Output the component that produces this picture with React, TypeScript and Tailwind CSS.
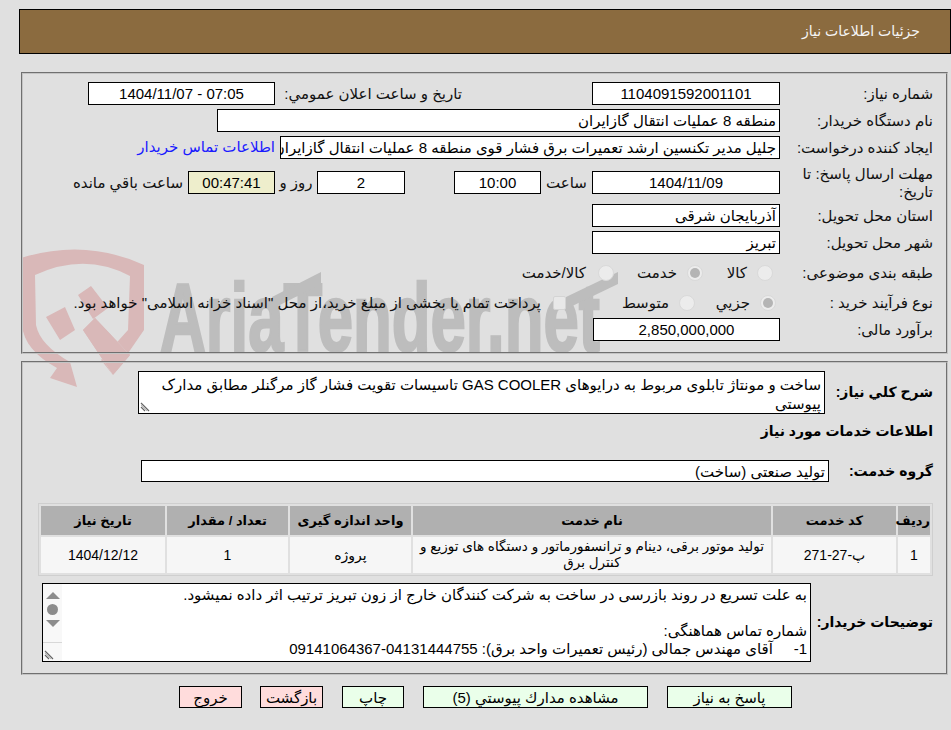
const font = { fontFamily: '"Liberation Sans", "DejaVu Sans", "Noto Sans CJK SC", sans-serif' }

const labelCls = 'shrink-0 text-[15px] leading-[18px] text-[#111]'
const boxCls = 'shrink-0 h-[23px] border border-black bg-white text-[15px] leading-[21px] overflow-hidden whitespace-nowrap'

function Field({ w, center, children, cls }: { w: string; center?: boolean; children: React.ReactNode; cls?: string }) {
  return (
    <div className={`${boxCls} ${w} ${center ? 'text-center' : 'px-[3px]'} ${cls ?? ''}`}>{children}</div>
  )
}

function Radio({ checked }: { checked?: boolean }) {
  return (
    <span className="shrink-0 w-[16px] h-[16px] rounded-full bg-[#ececec] border border-[#d9d9d9] flex items-center justify-center">
      {checked && <span className="w-[10px] h-[10px] rounded-full bg-[#b4b4b4]" />}
    </span>
  )
}

function Grip() {
  return (
    <svg className="absolute left-[1px] bottom-[1px]" width="12" height="12" viewBox="0 0 12 12">
      <path d="M1 3 L9 11 M1 7 L5 11" stroke="#666" strokeWidth="1.2" fill="none" />
      <path d="M1 5 L7 11" stroke="#bbb" strokeWidth="1" fill="none" />
    </svg>
  )
}

function Watermark() {
  return (
    <svg className="absolute left-0 top-0 pointer-events-none" width="951" height="400" viewBox="0 0 951 400">
      {/* shield */}
      <path
        d="M21 258 Q85 238 144 265 L144 330 L113 375 L130 355 L95 318 L83 330 L113 375 L101 360 L128 330 L130 276 Q85 252 35 275 L36 325 Q40 345 70 362 L77 387 L50 378 L57 368 Q24 350 22 325 Z"
        fill="#d9b8b8"
      />
      <path d="M46 317 L65 307 L75 330 L60 340 Z M78 295 L91 286 L108 308 L93 319 Z" fill="#d9b8b8" />
      <path d="M95 318 L83 330 L113 375 L130 355 Z" fill="#d9b8b8" />
      {/* wordmark */}
      <text
        x="160"
        y="351"
        fontFamily="Liberation Sans"
        fontWeight="700"
        fontSize="96"
        fill="#bdbdbd"
        stroke="#bdbdbd"
        strokeWidth="2.5"
        textLength="440"
        lengthAdjust="spacingAndGlyphs"
        direction="ltr"
      >
        AriaTender.net
      </text>
      <path d="M272 297 L321 272 L321 284 L272 309 Z M566 297 L618 272 L618 284 L566 309 Z" fill="#bdbdbd" />
    </svg>
  )
}

export default function App() {
  return (
    <div dir="rtl" style={font} className="relative w-[951px] h-[730px] overflow-hidden bg-[#e0e0e0] text-black pt-[9px]">
      <Watermark />

      <div className="relative ml-[19px] h-[45px] bg-[#8b6b3f] border border-black pr-[30px] flex items-center text-[14px] text-[#f5f5f5]">
        جزئيات اطلاعات نياز
      </div>

      {/* بخش اول */}
      <div className="relative ml-[21px] mr-[3px] mt-[18px] h-[282px] border-2 [border-style:groove] border-[#c4c4c4] pt-[8px] pr-[13px] flex flex-col">
        <div className="flex items-center">
          <div className={`${labelCls} w-[153px]`}>شماره نياز:</div>
          <Field w="w-[188px]" center>1104091592001101</Field>
          <div className={`${labelCls} w-[317px] pr-[130px] whitespace-nowrap`}>تاريخ و ساعت اعلان عمومي:</div>
          <Field w="w-[187px]" center>07:05 - 1404/11/07</Field>
        </div>

        <div className="flex items-center mt-[4px]">
          <div className={`${labelCls} w-[153px]`}>نام دستگاه خريدار:</div>
          <Field w="w-[563px]">منطقه 8 عمليات انتقال گازايران</Field>
        </div>

        <div className="flex items-center mt-[4px]">
          <div className={`${labelCls} w-[153px]`}>ايجاد كننده درخواست:</div>
          <Field w="w-[500px]">جليل مدير تكنسين ارشد تعميرات برق فشار قوى منطقه 8 عمليات انتقال گازايران</Field>
          <a className="mr-[5px] text-[15px] text-[#1a1aff] whitespace-nowrap">اطلاعات تماس خريدار</a>
        </div>

        <div className="flex items-center mt-[6px] h-[35px]">
          <div className={`${labelCls} w-[153px]`}>مهلت ارسال پاسخ: تا تاريخ:</div>
          <Field w="w-[188px]" center>1404/11/09</Field>
          <div className={`${labelCls} w-[51px] text-center`}>ساعت</div>
          <Field w="w-[87px]" center>10:00</Field>
          <div className="w-[49px] shrink-0" />
          <Field w="w-[88px]" center>2</Field>
          <div className={`${labelCls} w-[42px] text-center`}>روز و</div>
          <Field w="w-[87px]" center cls="!bg-[#eeeecc]">00:47:41</Field>
          <div className={`${labelCls} mr-[5px] whitespace-nowrap`}>ساعت باقي مانده</div>
        </div>

        <div className="flex items-center mt-[4px]">
          <div className={`${labelCls} w-[153px]`}>استان محل تحويل:</div>
          <Field w="w-[188px]">آذربايجان شرقى</Field>
        </div>

        <div className="flex items-center mt-[4px]">
          <div className={`${labelCls} w-[153px]`}>شهر محل تحويل:</div>
          <Field w="w-[188px]">تبريز</Field>
        </div>

        <div className="flex items-center mt-[5px] h-[27px]">
          <div className={`${labelCls} w-[160px]`}>طبقه بندی موضوعی:</div>
          <div className="w-[70px] flex items-center shrink-0">
            <Radio />
            <span className={`${labelCls} mr-[10px]`}>كالا</span>
          </div>
          <div className="w-[89px] flex items-center shrink-0">
            <Radio checked />
            <span className={`${labelCls} mr-[10px]`}>خدمت</span>
          </div>
          <div className="flex items-center shrink-0">
            <Radio />
            <span className={`${labelCls} mr-[12px]`}>كالا/خدمت</span>
          </div>
        </div>

        <div className="flex items-center mt-[3px] h-[28px]">
          <div className={`${labelCls} w-[157px]`}>نوع فرآيند خريد :</div>
          <div className="w-[81px] flex items-center shrink-0">
            <Radio checked />
            <span className={`${labelCls} mr-[10px]`}>جزيي</span>
          </div>
          <div className="w-[129px] flex items-center shrink-0">
            <Radio />
            <span className={`${labelCls} mr-[10px]`}>متوسط</span>
          </div>
          <div className="flex items-center shrink-0">
            <span className="shrink-0 w-[13px] h-[14px] rounded-[2px] bg-[#e8e8e8] border border-[#d4d4d4]" />
            <span className={`${labelCls} mr-[12px] whitespace-nowrap`}>پرداخت تمام يا بخشى از مبلغ خريد،از محل "اسناد خزانه اسلامى" خواهد بود.</span>
          </div>
        </div>

        <div className="flex items-center mt-[1px]">
          <div className={`${labelCls} w-[153px]`}>برآورد مالی:</div>
          <Field w="w-[187px]" center>2,850,000,000</Field>
        </div>
      </div>

      {/* بخش دوم */}
      <div className="relative ml-[21px] mr-[3px] mt-[7px] h-[314px] border-2 [border-style:groove] border-[#c4c4c4] pt-[8px] pr-[13px] flex flex-col">
        <div className="flex items-center">
          <div className="shrink-0 w-[108px] text-[14px] font-bold">شرح كلي نياز:</div>
          <div className="relative shrink-0 w-[687px] h-[43px] border border-black bg-white px-[3px] pt-[3px] text-[15px] leading-[19px] overflow-hidden">
            ساخت و مونتاژ تابلوی مربوط به درایوهای GAS COOLER تاسیسات تقویت فشار گاز مرگنلر مطابق مدارک پیوستی
            <Grip />
          </div>
        </div>

        <div className="h-[34px] flex items-center text-[14px] font-bold">اطلاعات خدمات مورد نياز</div>

        <div className="flex items-center mt-[12px]">
          <div className="shrink-0 w-[104px] text-[14px] font-bold">گروه خدمت:</div>
          <Field w="w-[688px]" cls="!h-[22px]">توليد صنعتى (ساخت)</Field>
        </div>

        <table className="mt-[21px] w-[895px] table-fixed border-separate [border-spacing:2px] border border-[#cfcfcf] text-[14px]">
          <thead>
            <tr className="h-[29px] bg-[#b0b0b0] text-[13px]">
              <th className="w-[32px] font-bold">رديف</th>
              <th className="w-[123px] font-bold">كد خدمت</th>
              <th className="w-[358px] font-bold">نام خدمت</th>
              <th className="w-[121px] font-bold">واحد اندازه گيری</th>
              <th className="w-[121px] font-bold">تعداد / مقدار</th>
              <th className="w-[124px] font-bold">تاريخ نياز</th>
            </tr>
          </thead>
          <tbody>
            <tr className="h-[36px] bg-[#f6f6f6] text-center leading-[16px]">
              <td>1</td>
              <td>پ-27-271</td>
              <td className="whitespace-nowrap text-[13.5px]">
                توليد موتور برقى، دينام و ترانسفورماتور و دستگاه های توزيع و
                <br />
                كنترل برق
              </td>
              <td>پروژه</td>
              <td>1</td>
              <td>1404/12/12</td>
            </tr>
          </tbody>
        </table>

        <div className="flex items-center mt-[7px]">
          <div className="shrink-0 w-[122px] text-[14px] font-bold">توضيحات خريدار:</div>
          <div className="relative shrink-0 w-[769px] h-[79px] border border-black bg-white px-[3px] pt-[2px] text-[15px] leading-[18px] overflow-hidden whitespace-pre">
            {'به علت تسریع در روند بازرسی در ساخت به شرکت کنندگان خارج از زون تبریز ترتیب اثر داده نمیشود.\n\nشماره تماس هماهنگی:\n1-     آقای مهندس جمالی (رئیس تعمیرات واحد برق): 04131444755-09141064367'}
            <div className="absolute left-0 top-0 bottom-0 w-[19px] bg-[#f8f8f8] flex flex-col items-center">
              <span className="mt-[8px] w-0 h-0 border-x-[7px] border-x-transparent border-b-[7px] border-b-[#8c8c8c]" />
              <span className="mt-[5px] w-[11px] h-[11px] rounded-full bg-[#8c8c8c]" />
              <span className="mt-[5px] w-0 h-0 border-x-[7px] border-x-transparent border-t-[7px] border-t-[#8c8c8c]" />
            </div>
            <div className="absolute left-0 bottom-0 w-[19px] h-[19px] bg-[#f8f8f8] border-t border-[#d8d8d8]">
              <Grip />
            </div>
          </div>
        </div>
      </div>

      {/* دکمه ها */}
      <div className="relative mt-[11px] mr-[159px] flex gap-[19px] text-[15px]">
        <button className="w-[125px] h-[22px] border border-black bg-[#eaffea]">پاسخ به نياز</button>
        <button className="w-[225px] h-[22px] border border-black bg-[#eaffea]">مشاهده مدارك پيوستي (5)</button>
        <button className="w-[62px] h-[22px] border border-black bg-[#eaffea]">چاپ</button>
        <button className="w-[63px] h-[22px] border border-black bg-[#ffdcdc]">بازگشت</button>
        <button className="w-[63px] h-[22px] mr-[-1px] border border-black bg-[#ffdcdc]">خروج</button>
      </div>
    </div>
  )
}
